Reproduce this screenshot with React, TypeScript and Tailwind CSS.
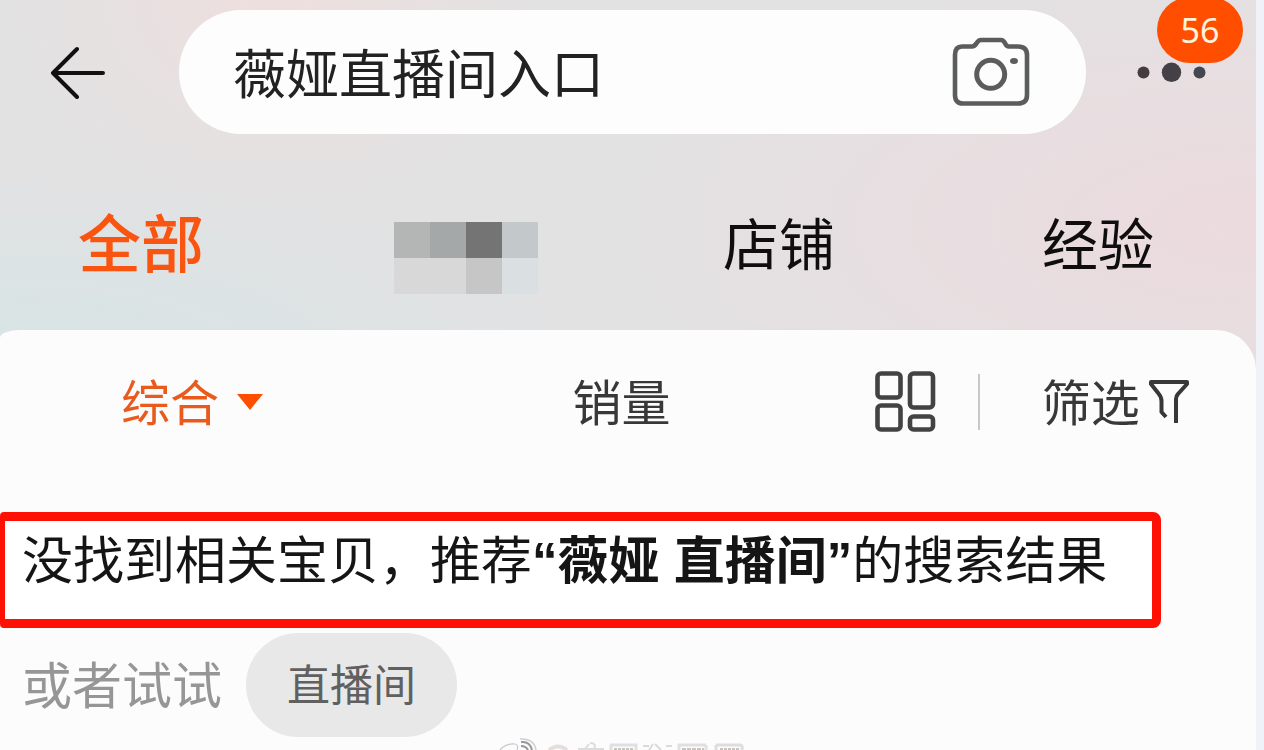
import { useState } from "react";

const FONT =
  "font-['Noto_Sans','Noto_Sans_CJK_SC',sans-serif]";

function BackIcon() {
  return (
    <svg width="56" height="54" viewBox="0 0 56 54" fill="none" aria-hidden="true">
      <path
        d="M27 4 3 28 27 52M3 28H53"
        stroke="#111"
        strokeWidth="4"
        strokeLinecap="round"
        strokeLinejoin="round"
      />
    </svg>
  );
}

function CameraIcon() {
  return (
    <svg width="78" height="70" viewBox="0 0 78 70" fill="none" aria-hidden="true">
      <path
        d="M10 9.500H20C25 9.500 24 3 29 3H49C54 3 52 9.500 57 9.500H66Q75 9.500 75 18V58Q75 66.500 66 66.500H11Q3 66.500 3 58V18Q3 9.500 10 9.500Z"
        stroke="#5b5c5c"
        strokeWidth="4.600"
        strokeLinejoin="round"
      />
      <circle cx="38.700" cy="37.300" r="14" stroke="#5b5c5c" strokeWidth="5" />
      <ellipse cx="62" cy="24" rx="4" ry="3" fill="#5b5c5c" />
    </svg>
  );
}

function MoreIcon() {
  return (
    <svg width="70" height="20" viewBox="0 0 70 20" aria-hidden="true">
      <circle cx="6.500" cy="10.500" r="6" fill="#453c3f" />
      <circle cx="34.500" cy="10.300" r="9.700" fill="#454045" />
      <circle cx="62.500" cy="10.500" r="6" fill="#44474f" />
    </svg>
  );
}

function LayoutIcon() {
  return (
    <svg
      width="62"
      height="62"
      viewBox="0 0 62 62"
      fill="none"
      stroke="#434343"
      strokeWidth="4.600"
      aria-hidden="true"
    >
      <rect x="3.500" y="2.500" width="23" height="24" rx="3.500" />
      <rect x="3.500" y="34.500" width="23" height="24" rx="3.500" />
      <rect x="36" y="2.500" width="23" height="34" rx="3.500" />
      <rect x="36" y="45.500" width="23" height="13" rx="3.500" />
    </svg>
  );
}

function FilterIcon() {
  return (
    <svg width="42" height="46" viewBox="0 0 42 46" fill="none" aria-hidden="true">
      <path
        d="M18 38 13.500 33V22Q13.500 18 10.500 14.500L3 5V3H39V5L30 15Q28 17 28 20V44"
        stroke="#383838"
        strokeWidth="4"
        strokeLinejoin="round"
      />
    </svg>
  );
}

function Watermark() {
  return (
    <svg width="248" height="12" viewBox="0 0 248 12" fill="none" aria-hidden="true">
      <path d="M2 12Q8 5 17 6Q21 7 19 12" stroke="#c9c7c9" strokeWidth="1.200" />
      <path d="M22 1Q36 0 38 12" stroke="#cfced0" strokeWidth="1.500" />
      <path d="M23 4Q32 3 34 12M23 8Q28 8 30 12" stroke="#96969c" strokeWidth="2" />
      <path d="M51 12Q60 5 69 12" stroke="#e4dfdc" strokeWidth="4" />
      <path d="M80 11H106M92 5Q99 5 96 11M87 11 91 6" stroke="#dddbdc" strokeWidth="2" />
      <path d="M112 7H138V12M113 12V7" stroke="#e0dfe1" strokeWidth="3" />
      <path d="M116 11H136" stroke="#c8c4c0" strokeWidth="2" strokeDasharray="3 1" />
      <path d="M145 8H151M155 6 151 12M157 6 163 12M168 8H174" stroke="#dbd9db" strokeWidth="2" />
      <path d="M180 7H208M181 12V7M208 12V7" stroke="#e0dfe1" strokeWidth="3" />
      <path d="M184 11H206" stroke="#c8c4c0" strokeWidth="2" strokeDasharray="4 1" />
      <path d="M218 7H242Q245 7 244 12M218 12V7" stroke="#dddcdf" strokeWidth="3" />
      <path d="M222 11H241" stroke="#c8c4c0" strokeWidth="2" strokeDasharray="3 1" />
    </svg>
  );
}

function SearchBar() {
  const [keyword, setKeyword] = useState("薇娅直播间入口");

  return (
    <div className="flex items-center pl-[50px] pr-[49px]">
      <button type="button" aria-label="返回">
        <BackIcon />
      </button>

      <label className="ml-[73px] flex h-[124px] min-w-0 flex-1 items-center rounded-full bg-[#fdfdfd] pl-[54px] pr-14">
        <input
          type="text"
          aria-label="搜索"
          value={keyword}
          onChange={(e) => setKeyword(e.target.value)}
          className="h-20 min-w-0 flex-1 bg-transparent pb-[2px] text-[53px] text-[#222] outline-none"
        />
        <button type="button" aria-label="拍照搜索">
          <CameraIcon />
        </button>
      </label>

      <button type="button" aria-label="更多" className="relative ml-[51px]">
        <MoreIcon />
        <span className="absolute -top-[65px] left-5 flex h-[66px] w-[86px] items-center justify-center rounded-full bg-[#ff4e00] text-[34px] leading-none text-[#fff3dc]">
          56
        </span>
      </button>
    </div>
  );
}

const mosaic = [
  "bg-[#b4b5b5]",
  "bg-[#a5a8a8]",
  "bg-[#747474]",
  "bg-[#c3c9cb]",
  "bg-[#d8d8d8]",
  "bg-[#d8d8d8]",
  "bg-[#c6c6c6]",
  "bg-[#dae0e1]",
];

function Tabs() {
  return (
    <nav className="grid grid-cols-[316fr_329fr_319fr_214fr] items-start pb-9 pl-[78px] pt-[77px] text-[56px] leading-[64px] text-[#0f0d0e]">
      <button
        type="button"
        className="justify-self-start text-[63px] font-medium text-[#fa5510]"
      >
        全部
      </button>
      <button
        type="button"
        aria-label="商品"
        className="mt-[11px] grid grid-cols-4 justify-self-start"
      >
        {mosaic.map((color, i) => (
          <span key={i} className={`size-9 ${color}`} />
        ))}
      </button>
      <button type="button" className="justify-self-start">
        店铺
      </button>
      <button type="button" className="justify-self-start">
        经验
      </button>
    </nav>
  );
}

function Filters() {
  return (
    <div className="grid h-[144px] grid-cols-[451fr_301fr_104fr_64fr_214fr] items-center pl-[121px] text-[49px] leading-[64px] text-[#383838]">
      <button type="button" className="flex items-center gap-[18px] text-[#e95b1c]">
        综合
        <svg width="26" height="16" viewBox="0 0 26 16" aria-hidden="true">
          <path d="M0 0H26L13 16Z" fill="#ff4e00" />
        </svg>
      </button>
      <button type="button" className="justify-self-start">
        销量
      </button>
      <button type="button" aria-label="切换布局" className="justify-self-start">
        <LayoutIcon />
      </button>
      <span className="h-14 w-[2px] bg-[#c8c8c8]" />
      <button type="button" className="flex items-center gap-2">
        筛选
        <FilterIcon />
      </button>
    </div>
  );
}

export default function App() {
  return (
    <div className={`min-h-screen overflow-hidden bg-[#f1f2f8] pr-2 ${FONT}`}>
      <div className="bg-[#e2e2e3] bg-[radial-gradient(ellipse_at_22%_0%,#eedfde_0%,transparent_20%),radial-gradient(ellipse_at_0%_48%,#d6e4e5_0%,transparent_32%),radial-gradient(ellipse_at_100%_30%,#ecdade_0%,transparent_38%)]">
        <header className="pt-[10px]">
          <SearchBar />
          <Tabs />
        </header>

        <main className="min-h-[420px] rounded-tl-[20px_8px] rounded-tr-[40px] bg-[#fcfcfd]">
          <Filters />

          <p className="mr-[95px] mt-[38px] h-[116px] whitespace-nowrap rounded-lg rounded-l-sm border-[9px] border-l-[5px] border-[#fe1004] bg-white pl-[17px] pt-[6px] text-[51px] leading-[64px] text-[#151515]">
            没找到相关宝贝，推荐
            <b className="font-['Liberation_Sans','Noto_Sans_CJK_SC',sans-serif]">
              “薇娅 直播间”
            </b>
            的搜索结果
          </p>

          <div className="mt-[5px] flex items-center gap-6 pl-[22px] text-[50px] leading-[64px] text-[#969696]">
            <span>或者试试</span>
            <button
              type="button"
              className="h-[104px] rounded-full bg-[#e8e8e9] px-[41px] text-[43px] text-[#606060]"
            >
              直播间
            </button>
          </div>

          <div className="pl-[498px] pt-px">
            <Watermark />
          </div>
        </main>
      </div>
    </div>
  );
}
